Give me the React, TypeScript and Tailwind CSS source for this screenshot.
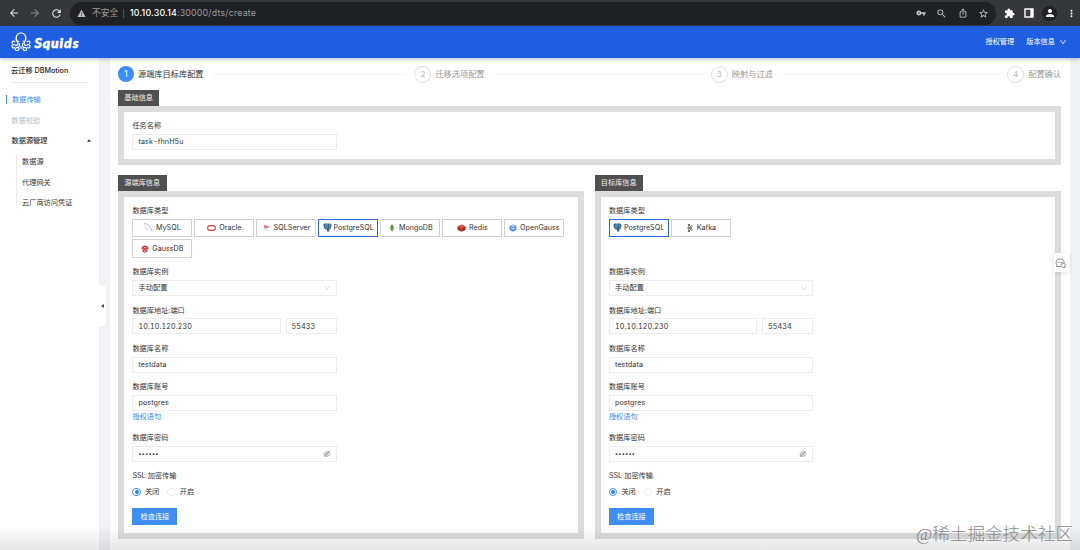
import type { ReactNode } from "react";
import { AiOutlineDown, AiOutlineEyeInvisible } from "react-icons/ai";
import { GrMysql } from "react-icons/gr";
import {
  MdArrowBack,
  MdArrowForward,
  MdExtension,
  MdIosShare,
  MdMoreVert,
  MdPerson,
  MdRefresh,
  MdStarBorder,
  MdVpnKey,
  MdWarning,
  MdZoomOut,
} from "react-icons/md";
import { SiApachekafka, SiMongodb } from "react-icons/si";

const OracleIcon = () => (
  <svg viewBox="0 0 18 12" className="w-[9px] h-[6px]">
    <rect x="1.3" y="1.3" width="15.4" height="9.4" rx="4.7" fill="none" stroke="#c74634" strokeWidth="2.2" />
  </svg>
);

const SqlServerIcon = () => (
  <svg viewBox="0 0 16 16" className="w-[8px] h-[8px]">
    <path d="M2 1.5 9 4.2 14 5.5 9.5 8 3 9Z" fill="#dc5f68" />
    <path d="M3 9 8 7.5 4.5 15Z" fill="#d9d9d9" />
    <path d="M2 1.5 5 6 3 9M5 6 14 5.5" fill="none" stroke="#f3c8cc" strokeWidth=".7" />
  </svg>
);

const PostgresIcon = () => (
  <svg viewBox="0 0 18 18" className="w-[9px] h-[9px]">
    <path
      d="M1 4C1 1.5 4 .8 6.5 1.5 9 .6 11 .6 12.5 1.2 15 .6 17.2 2 17 5c-.2 2.5-1.2 4.5-2.3 6.2h2c-.6 1.3-2.2 1.5-3.7 1.2-.2 2.4-.3 5-2.7 5.2-2.6.1-2.5-2.4-2.5-5-1 .6-2.500.5-3.500.1C2.500 11 1 7 1 4Z"
      fill="#33658d"
    />
    <path d="M6.5 2C5 4 5.8 8 4.8 10.5M12.3 2c1.7 2 1.5 5.5.7 9.5M6 8.5c1 1 2.500.6 2.300-1C8 5 7.800 3.800 9 2" fill="none" stroke="#e4edf4" strokeWidth=".7" />
  </svg>
);

const RedisIcon = () => (
  <svg viewBox="0 0 18 16" className="w-[9px] h-[8px]">
    <path d="M1 4.5 9 8v7.5L1 12Z" fill="#b52a1f" />
    <path d="M17 4.5 9 8v7.5l8-3.5Z" fill="#9c2018" />
    <path d="M9 1 17 4.5 9 8 1 4.5Z" fill="#d63a2e" />
    <path d="m1 8 8 3.5L17 8" fill="none" stroke="#c6302b" strokeWidth="1.4" />
    <path d="m7 3.5 3 .3 1.2 1.4" fill="none" stroke="#fff" strokeWidth=".8" />
  </svg>
);

const OpenGaussIcon = () => (
  <svg viewBox="0 0 16 16" className="w-[8px] h-[8px]">
    <path d="M8 .8 14.8 4v7.6L8 15.4 1.2 11.6V4Z" fill="#4b87e4" />
    <path d="M8 1.5 13.5 4.2 8 7 2.5 4.2Z" fill="#a9cbfa" />
    <path d="m4 7 4 2.2 4-2.2v2L8 11.2 4 9Z" fill="#e2edff" />
  </svg>
);

const GaussDbIcon = () => (
  <svg viewBox="0 0 16 16" className="w-[8px] h-[8px]">
    <path d="M1 7.5C1 3.5 4 1 8 1s7 2.5 7 6.5L12.5 9h-9Z" fill="#cf3733" />
    <path d="M3 9h10v4.5L8 15.5l-5-2Z" fill="#b93a38" />
    <path d="M4.5 6.3 8 4.5l3.5 1.8M5 10.5h2M9 10.5h2M6 13h4" fill="none" stroke="#fff" strokeWidth="1.1" />
  </svg>
);

const SquidLogo = () => (
  <svg viewBox="0 0 60 60" className="w-[20px] h-[20px]" fill="none" stroke="#fff" strokeWidth="3.6" strokeLinecap="round">
    <path d="M20 31C11 21 16 3 30 3s19 18 10 28" />
    <path d="M20 31c3 6-2 11-8 8-4-2-9-1-9 4 0 4 4 6 7 4M40 31c-3 6 2 11 8 8 4-2 9-1 9 4 0 4-4 6-7 4" />
    <path d="M4 34c-3-6 4-9 7-5M56 34c3-6-4-9-7-5" />
    <path d="M25 35c2 8-1 12-7 12-5 0-7 5-3 8 4 2 8 0 8-4M35 35c-2 8 1 12 7 12 5 0 7 5 3 8-4 2-8 0-8-4" />
    <path d="M23 51c5 1 7-3 7-8 0 5 2 9 7 8" strokeWidth="2.4" />
    <path d="M23 27v1M37 27v1" />
  </svg>
);

const ChatIcon = () => (
  <svg viewBox="0 0 22 20" className="w-[11px] h-[10px]" fill="none" stroke="#555" strokeWidth="1.5">
    <path d="M3.2 17.2 4 13.8C-.2 8.5 3.4 2 10 2c5 0 8.6 3.4 8.6 7.5M3.2 17.2h8" />
    <path d="M12 14.5c0-2.6 2-4.3 4.4-4.3 3.7 0 5.3 3.8 3.3 6.2l.4 2.2h-4c-2.4 0-4.1-1.8-4.1-4.1Z" />
    <path d="M5.500 8.700h1.800M9.100 8.700h1.800M12.700 8.700h1.800" strokeWidth="2" />
  </svg>
);

const databases: Record<string, ReactNode> = {
  MySQL: <GrMysql size={9} color="#8b9aa5" />,
  Oracle: <OracleIcon />,
  SQLServer: <SqlServerIcon />,
  PostgreSQL: <PostgresIcon />,
  MongoDB: <SiMongodb size={8} color="#59913d" />,
  Redis: <RedisIcon />,
  OpenGauss: <OpenGaussIcon />,
  GaussDB: <GaussDbIcon />,
  Kafka: <SiApachekafka size={8} color="#222" />,
};

const steps = ["源端库目标库配置", "迁移选项配置", "映射与过滤", "配置确认"];

const BrowserBar = () => (
  <div className="flex h-[26px] items-center bg-[#36373b] text-[#e4e5e7]">
    <div className="flex w-[70px] items-center gap-[9px] pl-[8px]">
      <MdArrowBack size={12} />
      <MdArrowForward size={12} color="#8b8c90" />
      <MdRefresh size={13} />
    </div>
    <div className="flex h-[23px] w-[926px] items-center rounded-full bg-[#202124] pl-[7px] pr-[7px] text-[8.8px] text-[#9a9b9f]">
      <MdWarning size={9} color="#b9babe" />
      <span className="ml-[6px] w-[27px]">不安全</span>
      <span className="ml-[4px] h-[9px] w-px bg-[#55565a]" />
      <span className="ml-[6px] tracking-[0.2px]">
        <span className="font-medium text-white">10.10.30.14</span>:30000/dts/create
      </span>
      <div className="ml-auto flex items-center gap-[10.5px] text-[#c6c7ca]">
        <MdVpnKey size={10} />
        <MdZoomOut size={11} />
        <MdIosShare size={10} />
        <MdStarBorder size={11} />
      </div>
    </div>
    <div className="flex flex-1 items-center justify-between pl-[8px] pr-[3px] text-white">
      <MdExtension size={11} />
      <svg viewBox="0 0 10 10" className="w-[10px] h-[10px]">
        <path d="M1 1h8v8H1z" fill="none" stroke="#fff" strokeWidth="1.4" />
        <path d="M6.3 1H9v8H6.3z" fill="#fff" />
      </svg>
      <div className="flex size-[15px] items-center justify-center rounded-full bg-[#202124]">
        <MdPerson size={12} />
      </div>
      <MdMoreVert size={11} />
    </div>
  </div>
);

const Header = () => (
  <header className="relative z-10 flex h-[32px] items-center bg-[#205ee1] pl-[11px] pr-[13px] text-white shadow-[0_1px_4px_rgba(0,21,80,0.3)]">
    <SquidLogo />
    <span className="ml-[3.5px] mt-px font-['Lato','Noto_Sans_CJK_SC',sans-serif] text-[14px] font-black italic leading-none tracking-[0.95px] [-webkit-text-stroke:0.6px_white]">
      Squids
    </span>
    <span className="ml-auto text-[7.2px]">授权管理</span>
    <span className="ml-[12px] text-[7.2px]">版本信息</span>
    <AiOutlineDown size={8} className="ml-[4px]" />
  </header>
);

const Sidebar = () => (
  <aside className="relative w-[99px] shrink-0 bg-white text-[7.2px]">
    <div className="mx-[11px] h-[25px] border-b border-[#e6e6e6] pt-[6px] text-[7.2px] font-medium leading-[13px] text-[#222]">
      云迁移 DBMotion
    </div>
    <div className="mt-[12px] ml-[6px] h-[9px] border-l border-[#3c8df5] pl-[5px] leading-[9px] text-[#3c8df5]">
      数据传输
    </div>
    <div className="mt-[11.7px] pl-[11.5px] leading-[9px] text-[#b9b9b9]">数据校验</div>
    <div className="mt-[11.7px] flex items-center justify-between pl-[11.5px] pr-[8px] leading-[9px] font-medium text-[#333]">
      数据源管理
      <svg viewBox="0 0 6 4" className="w-[4px] h-[3px]">
        <path d="M3 0 6 4H0Z" fill="#333" />
      </svg>
    </div>
    <div className="mt-[10px] ml-[16px] flex flex-col gap-[11.7px] border-l border-[#ececec] py-[1.7px] pl-[5px] leading-[9px] text-[#333]">
      <span>数据源</span>
      <span>代理网关</span>
      <span>云厂商访问凭证</span>
    </div>
    {/* collapse handle */}
    <div className="absolute left-[99px] top-[227px] flex h-[41px] w-[7px] items-center rounded-r-[4px] bg-white pl-[1.5px]">
      <svg viewBox="0 0 4 6" className="w-[3px] h-[4px]">
        <path d="M0 3 4 0v6Z" fill="#333" />
      </svg>
    </div>
  </aside>
);

const Steps = () => (
  <div className="flex h-[32px] w-[943px] items-center">
    {steps.map((step, i) => (
      <div key={step} className={i < 3 ? "flex flex-1 items-center" : "flex items-center"}>
        <div
          className={
            i === 0
              ? "flex size-[16px] shrink-0 items-center justify-center rounded-full bg-[#3c8df5] text-[8.5px] text-white"
              : "flex size-[17px] shrink-0 items-center justify-center rounded-full border border-[#dedede] text-[8.2px] text-[#bbb]"
          }
        >
          {i + 1}
        </div>
        <span
          className={
            i === 0
              ? "ml-[4px] whitespace-nowrap text-[8.2px] text-[#333]"
              : "ml-[4px] whitespace-nowrap text-[8.2px] text-[#999]"
          }
        >
          {step}
        </span>
        {i < 3 && <div className="ml-[9px] mr-[9px] h-px flex-1 bg-[#f3f3f3]" />}
      </div>
    ))}
  </div>
);

const Panel = ({ title, className, children }: { title: string; className: string; children: ReactNode }) => (
  <section className={className}>
    <div className="w-fit bg-[#505050] px-[6.3px] text-[7.2px] leading-[16px] text-[#f2f2f2]">{title}</div>
    <div className="flex-1 border-[6px] border-[#dcdcdc] bg-white px-[8.4px] pt-[7px]">{children}</div>
  </section>
);

const Field = ({ label, children }: { label: string; children: ReactNode }) => (
  <div className="mb-[7.8px]">
    <div className="mb-[1.5px] h-[13px] text-[7.2px] leading-[13px] text-[#333]">{label}</div>
    {children}
  </div>
);

const Input = ({
  value,
  className = "w-[204.4px]",
  textClass = "pt-[1.5px]",
  icon,
}: {
  value: string;
  className?: string;
  textClass?: string;
  icon?: ReactNode;
}) => (
  <div className={className}>
    <div className="flex h-[16px] items-center justify-between border border-[#ededed] px-[5px] text-[7.2px] tabular-nums tracking-[0.1px] text-[#333]">
      <span className={textClass}>{value}</span>
      {icon}
    </div>
  </div>
);

const Radio = ({ checked, label }: { checked?: boolean; label: string }) => (
  <span className="flex items-center gap-[4px]">
    <span
      className={
        checked
          ? "flex size-[8.5px] items-center justify-center rounded-full border border-[#3c8df5]"
          : "size-[8.5px] rounded-full border border-[#ececec]"
      }
    >
      {checked && <span className="size-[4px] rounded-full bg-[#2e80ee]" />}
    </span>
    {label}
  </span>
);

const DatabaseForm = ({ types, port }: { types: string[]; port: string }) => (
  <>
    <Field label="数据库类型">
      <div className="flex h-[39.2px] flex-wrap content-start gap-x-[2px] gap-y-[2px]">
        {types.map((type) => (
          <div
            key={type}
            className={
              type === "PostgreSQL"
                ? "flex h-[18.8px] w-[60px] items-center justify-center gap-[1.5px] border border-[#2c66d8] text-[7.2px] text-[#333]"
                : "flex h-[18.8px] w-[60px] items-center justify-center gap-[3px] border border-[#d2d2d2] text-[7.2px] text-[#333]"
            }
          >
            {databases[type]}
            <span className="pt-[1px]">{type}</span>
          </div>
        ))}
      </div>
    </Field>
    <Field label="数据库实例">
      <Input value="手动配置" textClass="pt-0" icon={<AiOutlineDown size={6.5} color="#bbb" />} />
    </Field>
    <Field label="数据库地址:端口">
      <div className="flex gap-[5px]">
        <Input value="10.10.120.230" className="w-[148.2px]" />
        <Input value={port} className="w-[51.2px]" />
      </div>
    </Field>
    <Field label="数据库名称">
      <Input value="testdata" />
    </Field>
    <Field label="数据库账号">
      <Input value="postgres" />
      <div className="h-[12.4px] text-[7.2px] leading-[12px] text-[#3c8df5]">授权语句</div>
    </Field>
    <Field label="数据库密码">
      <Input
        value="••••••"
        textClass="pt-[1px] text-[5.5px] tracking-[0.3px]"
        icon={<AiOutlineEyeInvisible size={8} color="#777" />}
      />
    </Field>
    <Field label="SSL 加密传输">
      <div className="flex h-[16.5px] items-center gap-[8px] text-[7.2px] text-[#333]">
        <Radio checked label="关闭" />
        <Radio label="开启" />
      </div>
    </Field>
    <button className="block h-[17px] w-[45px] bg-[#3f8ef5] text-[7.2px] leading-[17px] text-white">检查连接</button>
  </>
);

export default function App() {
  return (
    <div className="relative h-[550px] w-[1080px] overflow-hidden bg-[#f0f2f5] font-['Inter','Noto_Sans_CJK_SC',sans-serif]">
      <BrowserBar />
      <Header />
      <div className="flex h-[492px]">
        <Sidebar />
        <main className="ml-[11px] w-[960px] bg-white px-[8px]">
          <Steps />
          <Panel title="基础信息" className="flex h-[74.5px] w-[943px] flex-col">
            <Field label="任务名称">
              <Input value="task-fhnH5u" />
            </Field>
          </Panel>
          <div className="mt-[10.5px] flex w-[943px] justify-between">
            <Panel title="源端库信息" className="flex h-[363.5px] w-[466px] flex-col">
              <DatabaseForm
                types={["MySQL", "Oracle", "SQLServer", "PostgreSQL", "MongoDB", "Redis", "OpenGauss", "GaussDB"]}
                port="55433"
              />
            </Panel>
            <Panel title="目标库信息" className="flex h-[363.5px] w-[466.5px] flex-col">
              <DatabaseForm types={["PostgreSQL", "Kafka"]} port="55434" />
            </Panel>
          </div>
        </main>
      </div>
      {/* feedback tab */}
      <div className="absolute left-[1054px] top-[253px] flex h-[19px] w-[15px] items-center bg-white pl-[0.5px] shadow-[0_1px_5px_rgba(0,0,0,0.12)]">
        <ChatIcon />
      </div>
      <div className="pointer-events-none absolute inset-x-0 bottom-0 h-[24px] bg-linear-to-b from-black/0 to-black/10" />
      <div className="absolute right-[7px] top-[521px] whitespace-nowrap font-['Liberation_Serif','Noto_Sans_CJK_SC',serif] text-[17.6px] font-light leading-[26px] text-[#8b8b8b]">
        @稀土掘金技术社区
      </div>
    </div>
  );
}
